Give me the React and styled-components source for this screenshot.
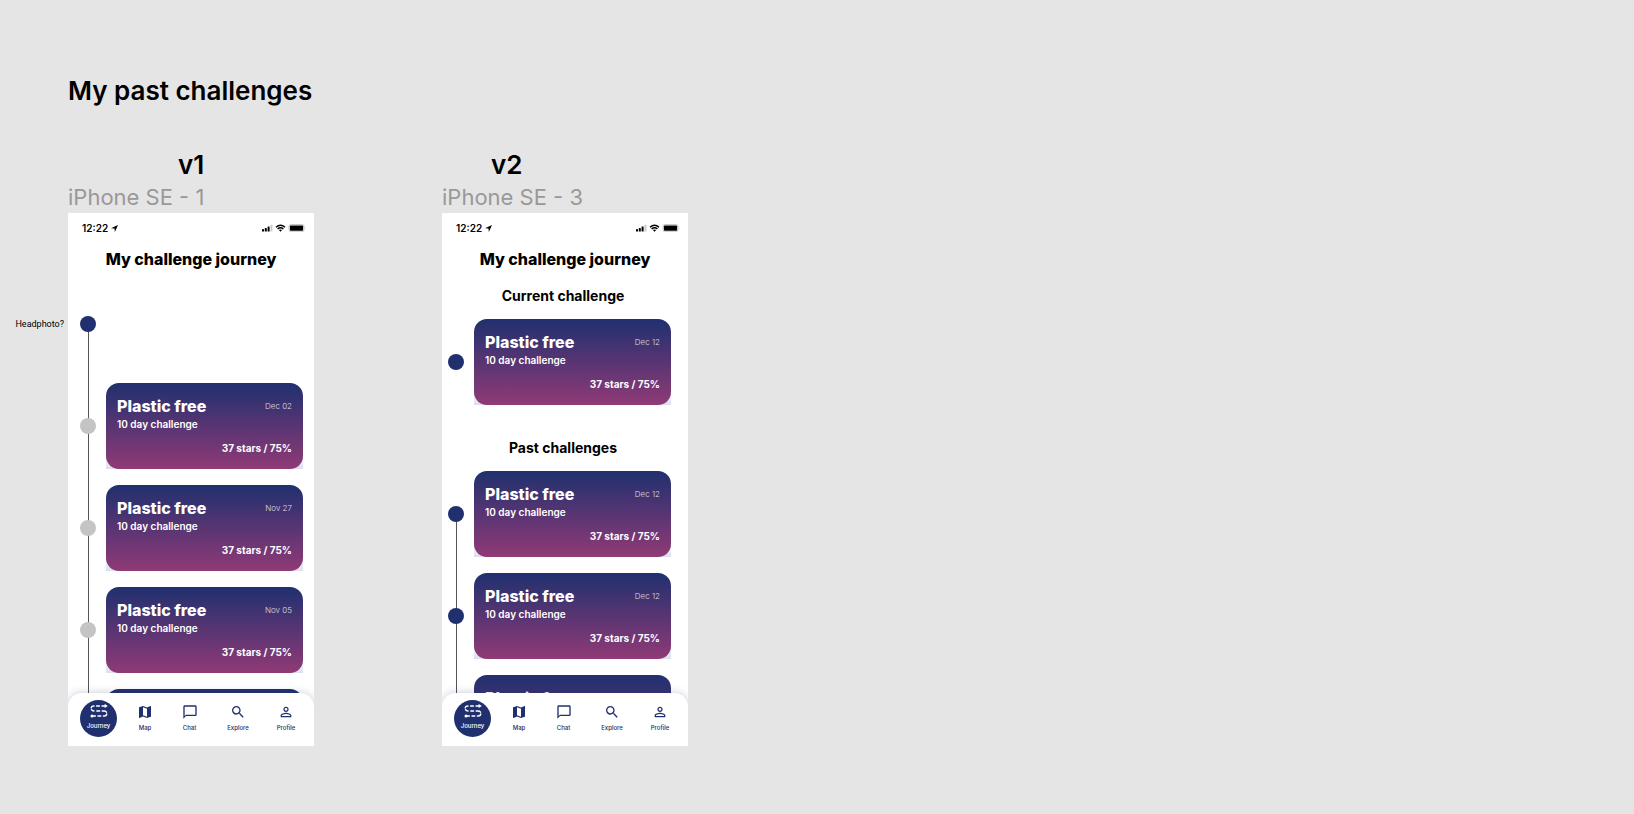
import React from "react";
import styled, { createGlobalStyle } from "styled-components";
import { MdMap, MdChatBubbleOutline, MdSearch, MdPersonOutline } from "react-icons/md";

const navy = "#20306f";

const GlobalStyle = createGlobalStyle`
  * { box-sizing: border-box; }
  body {
    margin: 0;
    background: #e5e5e5;
    color: #000;
    font-family: Inter, "Liberation Sans", sans-serif;
  }
`;

const Board = styled.main`
  min-height: 100vh;
  padding: 75px 68px 68px;
`;

const BoardTitle = styled.h1`
  margin: 0 0 42px;
  font-size: 26px;
  font-weight: 600;
  line-height: 32px;
`;

const Frames = styled.div`
  display: flex;
  align-items: flex-start;
  gap: 128px;
`;

const Frame = styled.section`
  position: relative;
  width: 246px;
  flex: none;
`;

const Version = styled.h2`
  margin: 0;
  padding-left: ${(p) => p.$indent}px;
  font-size: 26px;
  font-weight: 600;
  line-height: 32px;
`;

const FrameLabel = styled.p`
  margin: 0;
  color: #999;
  font-size: 22px;
  line-height: 32px;
  white-space: nowrap;
`;

const Annotation = styled.aside`
  position: absolute;
  top: 167px;
  right: 100%;
  padding-right: 4px;
  font: 400 9px/16px Roboto, sans-serif;
`;

const Phone = styled.article`
  display: flex;
  flex-direction: column;
  height: 533px;
  overflow: hidden;
  background: #fff;
`;

const StatusBar = styled.div`
  display: flex;
  flex: none;
  align-items: center;
  height: 30px;
  padding: 0 8px 0 14px;
  font-size: 10px;
  font-weight: 600;

  .arrow { margin-left: 3px; }
  .icons { margin-left: auto; }
`;

const ScreenTitle = styled.h3`
  margin: 0;
  font-size: 16px;
  font-weight: 800;
  line-height: 32px;
  text-align: center;
`;

/* Runs on behind the rounded corners of the tab bar. */
const Content = styled.div`
  flex: 1;
  min-height: 0;
  margin-bottom: -14px;
  overflow: hidden;
`;

const SectionTitle = styled.h4`
  margin: 0;
  padding: ${(p) => (p.$first ? 11 : 33)}px 4px 13px 0;
  font-size: 14px;
  font-weight: 700;
  line-height: 20px;
  text-align: center;
`;

const Timeline = styled.ul`
  position: relative;
  display: grid;
  gap: 16px;
  margin: 0;
  padding: ${(p) => (p.$wide ? 41 : 0)}px 0 0;
  list-style: none;

  &::before {
    content: "";
    position: absolute;
    display: ${(p) => (p.$line ? "block" : "none")};
    top: 49px;
    bottom: 0;
    left: ${(p) => (p.$wide ? 20 : 14)}px;
    width: 1px;
    background: #555;
  }
`;

const Entry = styled.li`
  display: grid;
  grid-template-columns: ${(p) => (p.$wide ? 38 : 32)}px 1fr;
  align-items: ${(p) => (p.$start ? "start" : "center")};
  min-height: 51px;
  padding-right: ${(p) => (p.$wide ? 11 : 17)}px;
`;

const Dot = styled.span`
  position: relative;
  width: 16px;
  height: 16px;
  margin-left: ${(p) => (p.$wide ? 12 : 6)}px;
  border-radius: 50%;
  background: ${(p) => (p.$past ? "#c4c4c4" : navy)};
`;

const CardBacking = styled.div`
  grid-column: 2;
  background: linear-gradient(#fff 80%, #dcdfec);
`;

const Card = styled.div`
  min-height: 86px;
  padding: 12px 11px 14px;
  border-radius: 13px;
  background: linear-gradient(${navy}, #903a76);
  color: #fff;
`;

const CardHead = styled.div`
  display: flex;
  align-items: center;
  justify-content: space-between;
`;

const CardTitle = styled.h5`
  margin: 0;
  font-size: 16px;
  font-weight: 800;
  line-height: 22px;
`;

const CardDate = styled.time`
  opacity: 0.8;
  font-size: 8px;
  font-weight: 300;
  line-height: 8px;
`;

const CardText = styled.p`
  margin: 0;
  font-size: 10px;
  font-weight: 600;
  line-height: 14px;
`;

const CardScore = styled(CardText)`
  margin-top: 10px;
  font-weight: 700;
  text-align: right;
`;

const TabBar = styled.nav`
  position: relative;
  display: grid;
  flex: none;
  grid-template-columns: 37px 56fr 33fr 64fr 32fr;
  align-items: start;
  height: 53px;
  padding: 7px 12px 0;
  border-radius: 14px 14px 0 0;
  background: #fff;
  box-shadow: 0 0 8px rgba(32, 48, 111, 0.25);
`;

const Tab = styled.button`
  display: flex;
  flex-direction: column;
  align-items: center;
  height: 37px;
  padding: 4px 0 0;
  border: 0;
  border-radius: 50%;
  background: ${(p) => (p.$active ? navy : "none")};
  color: ${(p) => (p.$active ? "#fff" : navy)};
  font: 500 6px/8px Inter, sans-serif;

  svg { flex: none; margin-bottom: 4px; }
`;

const LocationArrow = () => (
  <svg className="arrow" width="7" height="7" viewBox="0 0 6 6" aria-hidden="true">
    <path d="M6 0 L0 2.8 L3 3.1 L3.3 6 Z" fill="#000" />
  </svg>
);

const StatusIcons = () => (
  <svg className="icons" width="44" height="8" viewBox="0 0 44 8" aria-hidden="true">
    <rect x="0" y="5" width="2" height="2.6" rx=".4" />
    <rect x="2.8" y="4" width="2" height="3.6" rx=".4" />
    <rect x="5.6" y="2.4" width="2" height="5.2" rx=".4" />
    <rect x="8.4" y=".8" width="2" height="6.8" rx=".4" fill="#ccc" />
    <g fill="none" stroke="#000" strokeWidth="1.5">
      <path d="M14 3.2 Q18.5 -.8 23 3.2" />
      <path d="M15.6 5 Q18.5 2.5 21.4 5" />
    </g>
    <path d="M16.9 6 Q18.5 4.9 20.1 6 L18.5 7.8 Z" />
    <rect x="27" y=".5" width="15" height="7.2" rx="1.8" fill="#fff" stroke="#bbb" strokeWidth=".8" />
    <rect x="27.9" y="1.4" width="13.2" height="5.4" rx=".8" />
    <path d="M42.8 2.8 Q44 4.1 42.8 5.4 Z" fill="#bbb" />
  </svg>
);

const JourneyIcon = () => (
  <svg width="18" height="14" viewBox="0 0 18 14" aria-hidden="true">
    <g fill="none" stroke="currentColor" strokeWidth="1.4" strokeLinecap="round">
      <path d="M4 2 H3.4 Q1.4 2.1 1.2 3.9 M6.6 2 H9.4 M12 2 H15" />
      <path d="M1.5 5.6 Q2.2 7 4 7 M6.8 7 H9.6 M12.2 7 H14 Q15.6 7 16.5 8.2" />
      <path d="M16.8 10 Q16.4 12 14.4 12 H13.4 M10.8 12 H8 M5.4 12 H2.6" />
    </g>
    <path d="M14.6 -.1 L17.8 2 L14.6 4.1 Z" fill="currentColor" />
    <circle cx="2" cy="12" r="1.5" fill="currentColor" />
  </svg>
);

const tabs = [
  ["Journey", JourneyIcon],
  ["Map", MdMap],
  ["Chat", MdChatBubbleOutline],
  ["Explore", MdSearch],
  ["Profile", MdPersonOutline],
];

function Tabs() {
  return (
    <TabBar aria-label="Main">
      {tabs.map(([name, Icon], i) => (
        <Tab key={name} type="button" $active={i === 0}>
          {i === 0 ? <Icon /> : <Icon size={16} />}
          {name}
        </Tab>
      ))}
    </TabBar>
  );
}

function Challenge({ date, past, wide }) {
  return (
    <Entry $wide={wide}>
      <Dot $wide={wide} $past={past} />
      <CardBacking>
        <Card>
          <CardHead>
            <CardTitle>Plastic free</CardTitle>
            <CardDate>{date}</CardDate>
          </CardHead>
          <CardText>10 day challenge</CardText>
          <CardScore>37 stars / 75%</CardScore>
        </Card>
      </CardBacking>
    </Entry>
  );
}

function Screen({ children }) {
  return (
    <Phone>
      <StatusBar>
        12:22
        <LocationArrow />
        <StatusIcons />
      </StatusBar>
      <ScreenTitle>My challenge journey</ScreenTitle>
      <Content>{children}</Content>
      <Tabs />
    </Phone>
  );
}

export default function App() {
  return (
    <Board>
      <GlobalStyle />
      <BoardTitle>My past challenges</BoardTitle>
      <Frames>
        <Frame>
          <Version $indent={110}>v1</Version>
          <FrameLabel>iPhone SE - 1</FrameLabel>
          <Annotation>Headphoto?</Annotation>
          <Screen>
            <Timeline $line $wide>
              <Entry $wide $start>
                <Dot $wide />
              </Entry>
              {["Dec 02", "Nov 27", "Nov 05"].map((date) => (
                <Challenge key={date} date={date} past wide />
              ))}
              <Entry $wide>
                <CardBacking>
                  <Card />
                </CardBacking>
              </Entry>
            </Timeline>
          </Screen>
        </Frame>
        <Frame>
          <Version $indent={49}>v2</Version>
          <FrameLabel>iPhone SE - 3</FrameLabel>
          <Screen>
            <SectionTitle $first>Current challenge</SectionTitle>
            <Timeline>
              <Challenge date="Dec 12" />
            </Timeline>
            <SectionTitle>Past challenges</SectionTitle>
            <Timeline $line>
              {[1, 2, 3].map((n) => (
                <Challenge key={n} date="Dec 12" />
              ))}
            </Timeline>
          </Screen>
        </Frame>
      </Frames>
    </Board>
  );
}
